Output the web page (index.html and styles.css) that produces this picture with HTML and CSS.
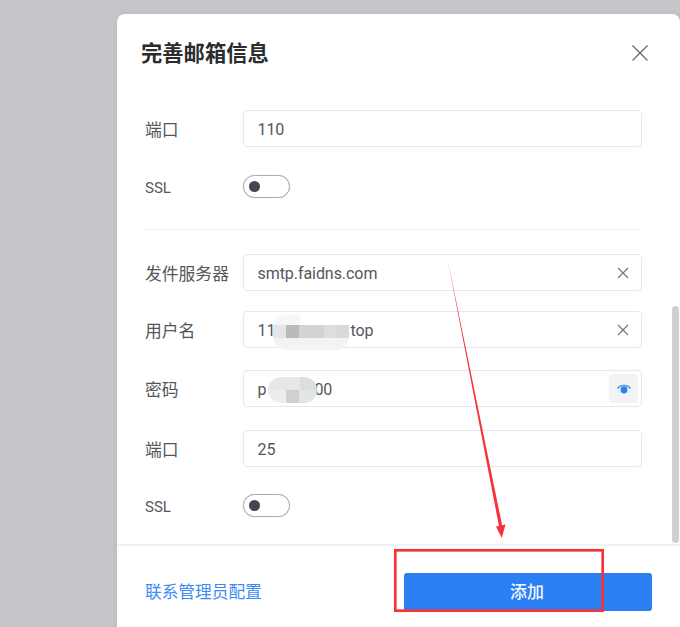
FILE: index.html
```html
<!DOCTYPE html>
<html lang="zh-CN">
<head>
<meta charset="utf-8">
<title>完善邮箱信息</title>
<link rel="stylesheet" href="styles.css">
</head>
<body>
<div class="overlay">
  <div class="modal">
    <header class="modal-head">
      <h2 class="modal-title">完善邮箱信息</h2>
      <svg class="close" width="18" height="18" viewBox="0 0 18 18"><path d="M1.5 1.5 16.500 16.500M16.500 1.500 1.500 16.500" fill="none" stroke="#66686d" stroke-width="1.300"/></svg>
    </header>
    <div class="modal-body">
      <div class="row row-port-a"><label class="label">端口</label><div class="input"><span>110</span></div></div>
      <div class="row row-ssl-a"><label class="label label-latin">SSL</label><div class="switch"><i class="knob"></i></div></div>
      <hr class="divider">
      <div class="row row-server"><label class="label">发件服务器</label><div class="input"><span>smtp.faidns.com</span>
        <svg class="clear" width="12" height="12" viewBox="0 0 12 12"><path d="M1 1 11 11M11 1 1 11" fill="none" stroke="#77797e" stroke-width="1.300"/></svg></div></div>
      <div class="row row-user"><label class="label">用户名</label><div class="input"><span>11<span class="gap-user"></span>top</span>
        <div class="mosaic mosaic-user"></div>
        <svg class="clear" width="12" height="12" viewBox="0 0 12 12"><path d="M1 1 11 11M11 1 1 11" fill="none" stroke="#77797e" stroke-width="1.300"/></svg></div></div>
      <div class="row row-pass"><label class="label">密码</label><div class="input"><span>p<span class="gap-pass"></span>00</span>
        <div class="mosaic mosaic-pass"></div>
        <div class="eye"><svg width="16" height="12" viewBox="0 0 16 12"><path d="M1.500 5.500C5 1.500 11 1.500 14.500 5.500" fill="none" stroke="#5b97f5" stroke-width="1.500"/><circle cx="8" cy="7" r="3.400" fill="#2a7ff2"/></svg></div></div></div>
      <div class="row row-port-b"><label class="label">端口</label><div class="input"><span>25</span></div></div>
      <div class="row row-ssl-b"><label class="label label-latin">SSL</label><div class="switch"><i class="knob"></i></div></div>
    </div>
    <footer class="modal-foot">
      <a class="link">联系管理员配置</a>
      <button class="primary">添加</button>
    </footer>
    <div class="scrollbar"></div>
  </div>
  <svg class="annotation" width="680" height="627" viewBox="0 0 680 627">
    <path d="M447.300 258 L499.700 530 L503 529.500 Z" fill="#f5333a"/>
    <path d="M496 526.500 L505.500 524.500 L501.800 538 Z" fill="#f5333a"/>
    <rect x="395.300" y="550.300" width="207.400" height="60.400" fill="none" stroke="#f5333a" stroke-width="2.700"/>
  </svg>
</div>
</body>
</html>
```
FILE: styles.css
```css
* { box-sizing: border-box; }
html, body { margin: 0; height: 100%; }
body { font-family: "Roboto", "Noto Sans CJK SC", sans-serif; overflow: hidden; }

.overlay {
  position: relative;
  width: 680px;
  height: 627px;
  overflow: hidden;
  background: #c5c6c9;
  padding: 14px 0 0 117px;
}

.modal {
  position: relative;
  width: 563px;
  height: 640px;
  background: #fff;
  border-radius: 8px;
  box-shadow: 0 0 6px rgba(0, 0, 0, .07);
  display: flex;
  flex-direction: column;
}

.modal-head {
  height: 80px;
  padding: 27px 31px 0 24px;
  display: flex;
  justify-content: space-between;
  align-items: flex-start;
}
.modal-title {
  margin: 0;
  font-size: 21.300px;
  line-height: 26px;
  font-weight: 700;
  color: #2a2c30;
}
.close { margin-top: 3px; }

.modal-body {
  height: 450px;
  padding: 16px 38px 0 28px;
  display: flex;
  flex-direction: column;
}

.row { display: flex; align-items: center; flex: none; }
.label {
  width: 98px;
  flex: none;
  padding-top: 2px;
  font-size: 16.800px;
  line-height: 20px;
  color: #53565b;
}
.label-latin { font-size: 15px; }
.row-ssl-a { margin-top: 28px; }
.row-server { margin-top: 0; }
.row-user { margin-top: 20px; }
.row-pass { margin-top: 22px; }
.row-port-b { margin-top: 23px; }
.row-ssl-b { margin-top: 27px; }

.input {
  position: relative;
  width: 399px;
  height: 37px;
  border: 1.500px solid #e6e8ef;
  border-radius: 4px;
  padding: 1px 13px 0 13.500px;
  display: flex;
  align-items: center;
  justify-content: space-between;
  font-size: 16px;
  letter-spacing: -.06px;
  color: #53565b;
  background: #fff;
}
.gap-user { display: inline-block; width: 75px; }
.gap-pass { display: inline-block; width: 48px; }

.clear { margin-right: -1px; margin-top: -1px; }

.eye {
  width: 29px;
  height: 29px;
  margin-right: -10px;
  margin-top: -1px;
  background: #f1f3f5;
  border-radius: 3px;
  display: flex;
  align-items: center;
  justify-content: center;
}

.mosaic { position: absolute; }
.mosaic-user {
  left: 29px;
  top: 3px;
  width: 76px;
  height: 35px;
  border-radius: 14px 0 14px 14px;
  background:
    linear-gradient(#f6f6f6, #f6f6f6) 0 0 / 27px 10px no-repeat,
    linear-gradient(90deg, #e4e5e6 0 13px, #b9babb 13px 26px, #d2d3d4 26px 51px, #dcdddd 51px 64px, #d8d9d9 64px 76px) 0 10px / 100% 13px no-repeat,
    linear-gradient(#f3f3f3, #f3f3f3) 0 23px / 100% 12px no-repeat;
}
.mosaic-pass {
  left: 23.500px;
  top: 5.500px;
  width: 49px;
  height: 26px;
  border-radius: 13px;
  background:
    linear-gradient(90deg, #e6e7e8 0 32px, #dcdddd 32px 49px) 0 0 / 100% 13px no-repeat,
    linear-gradient(90deg, #ecedee 0 18px, #cfd0d0 18px 31px, #e3e4e4 31px 49px) 0 13px / 100% 13px no-repeat;
}

.switch {
  position: relative;
  width: 47px;
  height: 23px;
  border: 1px solid #a9abae;
  border-radius: 12px;
  background: #fff;
  box-shadow: 0 0 1px #c8c9cc;
}
.knob {
  position: absolute;
  left: 5px;
  top: 5px;
  width: 11px;
  height: 11px;
  border-radius: 50%;
  background: #43464e;
}

.divider {
  flex: none;
  width: 497px;
  height: 1px;
  margin: 31px 0 24px;
  border: 0;
  background: #eeeff2;
}

.modal-foot {
  height: 110px;
  border-top: 2px solid #f1f2f3;
  padding: 27px 28px 0 28px;
  display: flex;
  justify-content: space-between;
  align-items: flex-start;
}
.link {
  margin-top: 10px;
  font-size: 16.700px;
  line-height: 20px;
  color: #3c8cf4;
}
.primary {
  width: 248px;
  height: 38px;
  border: 0;
  border-radius: 3px;
  background: #2a7ff2;
  color: #f2f7ff;
  font: 500 17px/38px "Roboto", "Noto Sans CJK SC", sans-serif;
  padding: 0 2px 0 0;
}

.scrollbar {
  position: absolute;
  right: 1px;
  top: 292px;
  width: 7px;
  height: 237px;
  border-radius: 4px;
  background: #cfd0d2;
}

.annotation { position: absolute; left: 0; top: 0; pointer-events: none; }
```
